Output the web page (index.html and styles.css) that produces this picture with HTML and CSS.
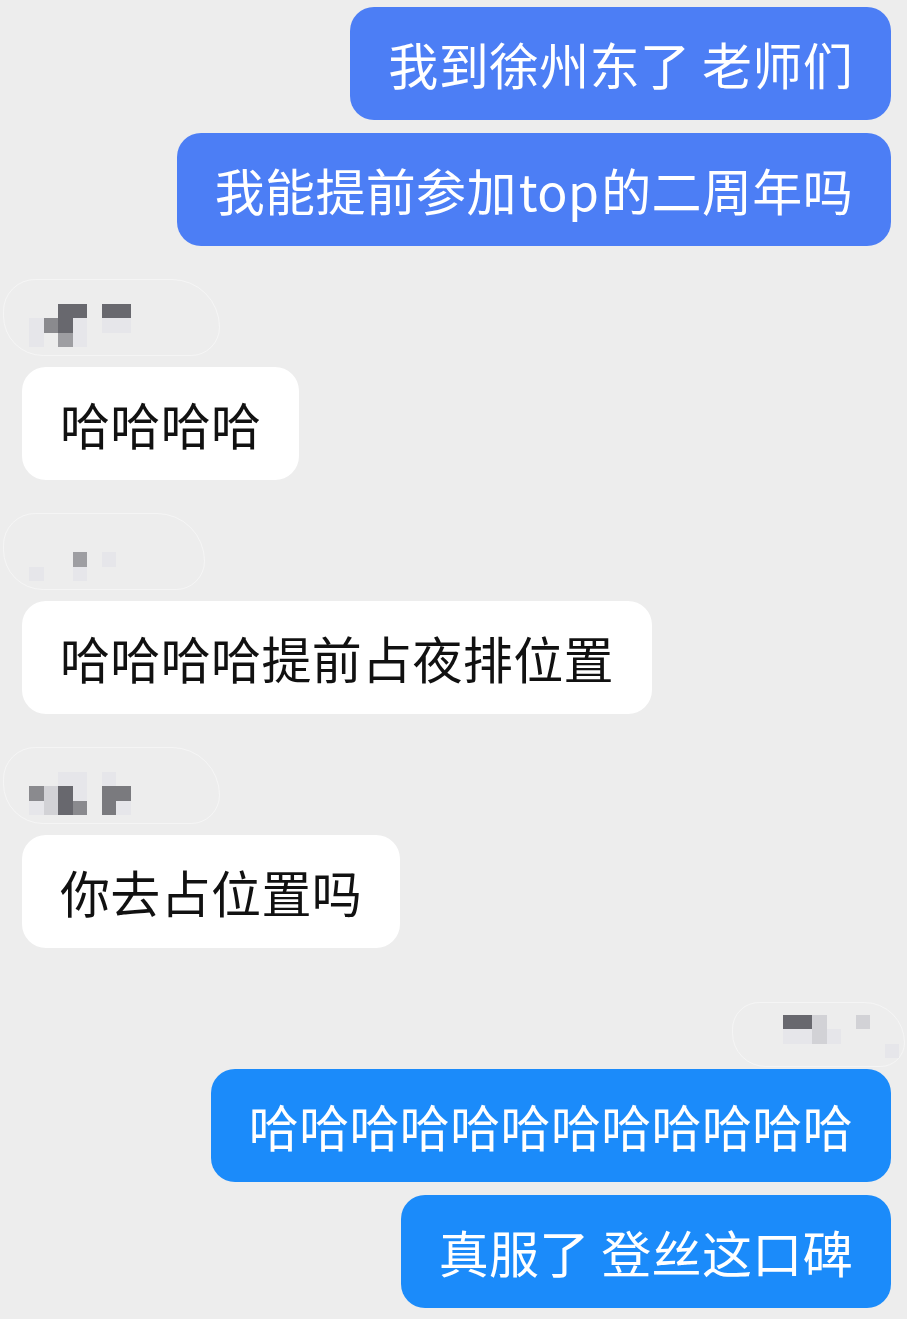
FILE: index.html
```html
<!DOCTYPE html>
<html lang="zh-CN">
<head>
  <meta charset="UTF-8">
  <title>聊天记录</title>
  <link rel="stylesheet" href="styles.css">
</head>
<body>
  <div class="chat">
    <div class="bubble out blue">我到徐州东了 老师们</div>
    <div class="bubble out blue">我能提前参加<span class="latin">top</span>的二周年吗</div>

    <!-- 昵称打码 -->
    <div class="name">
      <div class="smudge">
        <div class="px-row"><i></i><i></i><i class="d"></i><i class="d"></i><i></i><i class="d"></i><i class="d"></i></div>
        <div class="px-row"><i class="f"></i><i class="m"></i><i class="d"></i><i class="f"></i><i></i><i class="f"></i><i class="f"></i></div>
        <div class="px-row"><i class="f"></i><i></i><i class="g"></i><i class="f"></i><i></i><i></i><i></i></div>
      </div>
    </div>
    <div class="bubble in">哈哈哈哈</div>

    <div class="name">
      <div class="smudge">
        <div class="px-row"><i></i><i></i><i></i><i></i><i></i><i></i></div>
        <div class="px-row"><i></i><i></i><i></i><i class="g"></i><i></i><i class="f"></i></div>
        <div class="px-row"><i class="f"></i><i></i><i></i><i class="f"></i><i></i><i></i></div>
      </div>
    </div>
    <div class="bubble in">哈哈哈哈提前占夜排位置</div>

    <div class="name">
      <div class="smudge">
        <div class="px-row"><i></i><i></i><i class="f"></i><i class="f"></i><i></i><i class="f"></i><i></i></div>
        <div class="px-row"><i class="m"></i><i class="l"></i><i class="d"></i><i class="f"></i><i></i><i class="k"></i><i class="k"></i></div>
        <div class="px-row"><i class="f"></i><i class="l"></i><i class="d"></i><i class="m"></i><i></i><i class="k"></i><i class="f"></i></div>
      </div>
    </div>
    <div class="bubble in">你去占位置吗</div>

    <div class="name right">
      <div class="smudge">
        <div class="px-row"><i class="d"></i><i class="d"></i><i class="l"></i><i></i><i></i><i class="l"></i><i></i><i></i></div>
        <div class="px-row"><i class="f"></i><i class="f"></i><i class="l"></i><i class="f"></i><i></i><i></i><i></i><i></i></div>
        <div class="px-row"><i></i><i></i><i></i><i></i><i></i><i></i><i></i><i class="f"></i></div>
      </div>
    </div>
    <div class="bubble out sky">哈哈哈哈哈哈哈哈哈哈哈哈</div>
    <div class="bubble out sky">真服了 登丝这口碑</div>
  </div>
</body>
</html>
```

FILE: styles.css
```css
body {
  background-color: #ededed;
  font-family: "Noto Sans CJK SC", "Noto Sans", sans-serif;
  margin: 0;
}
.chat {
  display: flex;
  flex-direction: column;
  padding: 7px 16px 0 22px;
}
.bubble {
  font-size: 50px;
  line-height: 61px;
  letter-spacing: 0.35px;
  padding: 26px 38px;
  border-radius: 24px;
  white-space: nowrap;
}
.bubble + .bubble {
  margin-top: 13px;
}
.out {
  align-self: flex-end;
  color: #fff;
}
.in {
  align-self: flex-start;
  background: #fff;
  color: #111;
}
.blue {
  background: #4c7ef5;
}
.sky {
  background: #1b8bfa;
}
.latin {
  margin: 0 2px;
}
.name {
  height: 121px;
  box-sizing: border-box;
  display: flex;
  align-items: flex-end;
  padding-bottom: 11px;
}
.name.right {
  justify-content: flex-end;
  padding-bottom: 2px;
}
.smudge {
  margin-left: -19px;
  padding: 24px 88px 8px 25px;
  border: 1.5px solid rgba(255, 255, 255, 0.45);
  border-radius: 40px 60px 36px 50px;
}
.right .smudge {
  margin-left: 0;
  margin-right: -14px;
  padding: 12px 5px 8px 50px;
}
.px-row {
  display: flex;
}
.px-row i {
  width: 14.5px;
  height: 14.5px;
}
.px-row .d { background: #68686e; }
.px-row .k { background: #7a7a7e; }
.px-row .m { background: #8a8a8e; }
.px-row .g { background: #9e9ea2; }
.px-row .l { background: #d2d2d6; }
.px-row .f { background: #e6e6ea; }
```
